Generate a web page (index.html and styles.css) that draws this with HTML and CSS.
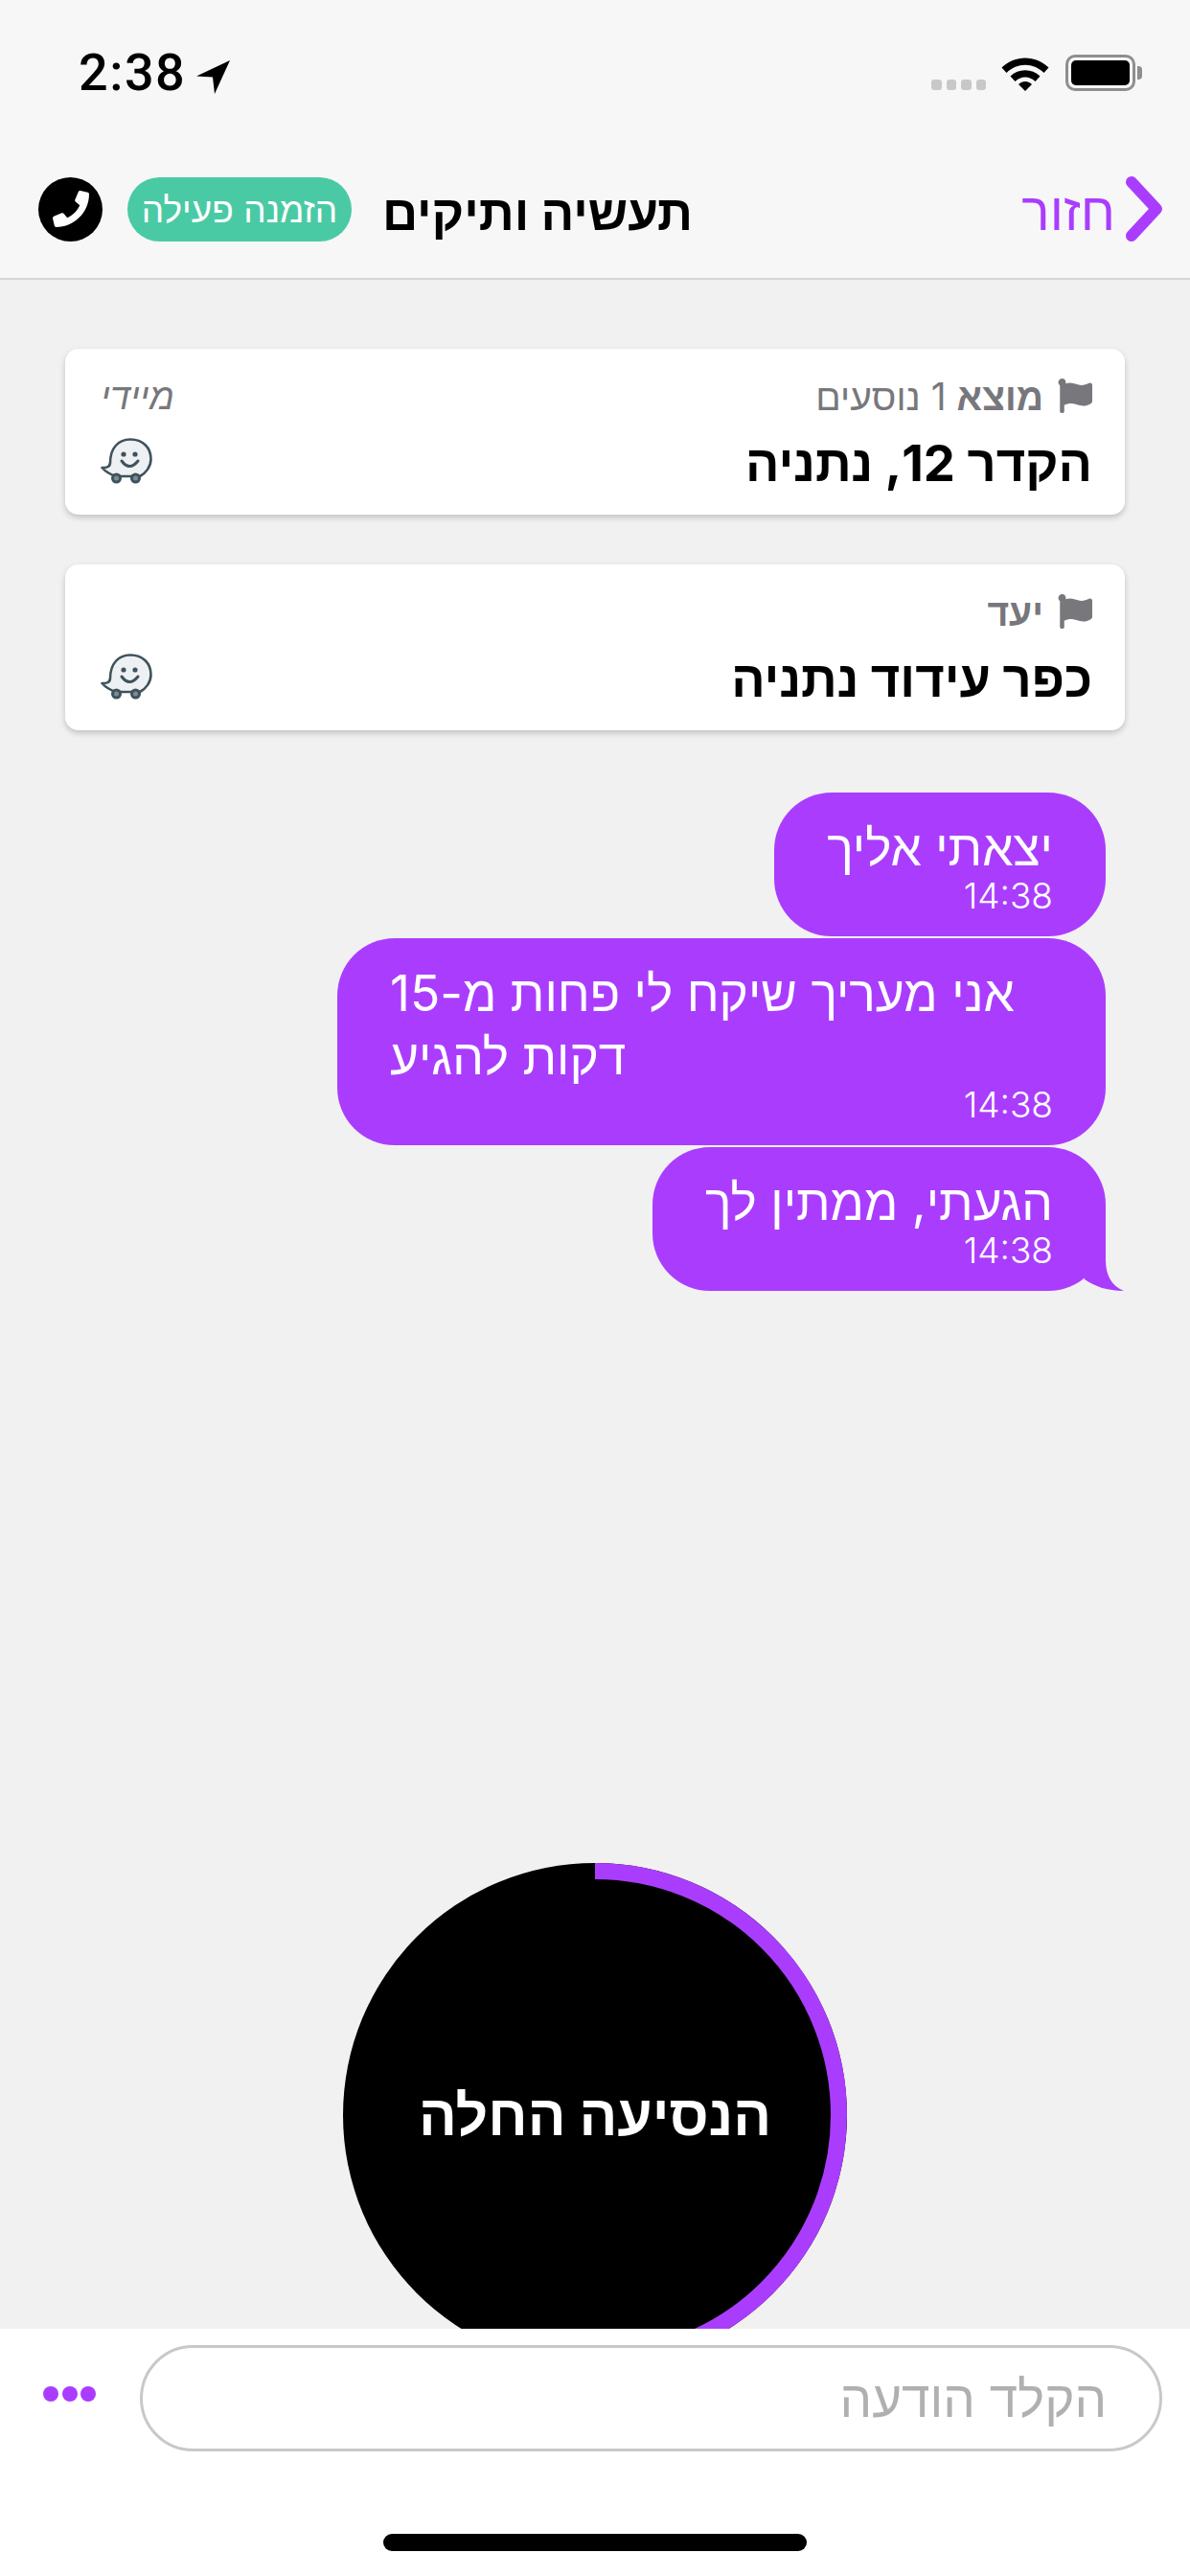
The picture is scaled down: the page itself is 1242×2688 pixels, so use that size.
FILE: index.html
```html
<!DOCTYPE html>
<html lang="he" dir="rtl">
<head>
<meta charset="utf-8">
<title>Chat</title>
<link rel="stylesheet" href="styles.css">
</head>
<body>
<svg class="defs" width="0" height="0" aria-hidden="true">
  <symbol id="flag" viewBox="0 0 512 512">
    <path d="M349.565 98.783C295.978 98.783 251.721 64 184.348 64c-24.955 0-47.309 4.384-68.045 12.013a55.947 55.947 0 0 0 3.586-23.562C118.117 24.015 94.806 1.206 66.338.048 34.345-1.254 8 24.296 8 56c0 19.026 9.497 35.825 24 45.945V488c0 13.255 10.745 24 24 24h16c13.255 0 24-10.745 24-24v-94.4c28.311-12.064 63.582-22.122 114.435-22.122 53.588 0 97.844 34.783 165.217 34.783 48.169 0 86.667-16.294 122.505-40.858C506.84 359.452 512 349.571 512 339.045v-243.1c0-23.393-24.269-38.87-45.485-29.016-34.338 15.948-76.454 31.854-116.95 31.854z"/>
  </symbol>
  <symbol id="waze" viewBox="0 0 54 48">
    <path d="M10 26C10 10 19 1.500 31 1.500C44 1.500 52.500 10 52.500 22C52.500 30 47 37 41 40L16 40C10 38 5 35 1.500 31C5 31 9.500 31 10 26Z" fill="#eef1f3" stroke="#3f525c" stroke-width="2.600" stroke-linejoin="round"/>
    <circle cx="16.500" cy="42" r="4" fill="#7d8c94" stroke="#3f525c" stroke-width="3"/>
    <circle cx="36.500" cy="42" r="4" fill="#7d8c94" stroke="#3f525c" stroke-width="3"/>
    <circle cx="24" cy="17" r="2.600" fill="#3f525c"/>
    <circle cx="36" cy="17" r="2.600" fill="#3f525c"/>
    <path d="M22 24Q30 35 39 24" fill="none" stroke="#3f525c" stroke-width="3" stroke-linecap="round"/>
  </symbol>
</svg>

<div class="page">
  <header class="top">
    <div class="status">
      <div class="status-left">
        <span class="clock">2:38</span>
        <svg class="loc" viewBox="0 0 36 36"><path d="M35 0L0 16.500L17 17.500L19 35Z"/></svg>
      </div>
      <div class="status-right">
        <div class="signal"><i></i><i></i><i></i><i></i></div>
        <svg class="wifi" viewBox="0 0 50 38">
          <path d="M0.500 13.500C14 0 36 0 49.500 13.500L44.500 19C33.500 8 16.500 8 5.500 19Z"/>
          <path d="M9.500 22.500C18 14 32 14 40.500 22.500L35.500 28C29.500 22 20.500 22 14.500 28Z"/>
          <path d="M18 31C22 27 28 27 32 31L25 38Z"/>
        </svg>
        <div class="battery"><div class="cell"></div><div class="nub"></div></div>
      </div>
    </div>
    <nav class="nav">
      <div class="back">
        <svg class="chev" viewBox="0 0 38 68"><path d="M6 6L32 34L6 62"/></svg>
        <span>חזור</span>
      </div>
      <div class="nav-info">
        <h1 class="title">תעשיה ותיקים</h1>
        <span class="badge">הזמנה פעילה</span>
        <span class="phone">
          <svg viewBox="0 0 512 512"><path d="M493.400 24.600l-104-24c-11.300-2.600-22.900 3.300-27.500 13.900l-48 112c-4.200 9.800-1.400 21.300 6.900 28l60.600 49.600c-36 76.700-98.900 140.500-177.200 177.200l-49.600-60.600c-6.800-8.300-18.200-11.100-28-6.900l-112 48C3.900 366.500-2 378.100.6 389.400l24 104C27.100 504.200 36.700 512 48 512c256.100 0 464-207.500 464-464 0-11.200-7.700-20.900-18.600-23.400z"/></svg>
        </span>
      </div>
    </nav>
  </header>

  <main class="main">
    <section class="card">
      <div class="card-head">
        <svg class="flag"><use href="#flag"/></svg>
        <span class="label"><b>מוצא</b> 1 נוסעים</span>
        <em class="when">מיידי</em>
      </div>
      <div class="card-body">
        <span class="place">הקדר 12, נתניה</span>
        <svg class="waze"><use href="#waze"/></svg>
      </div>
    </section>
    <section class="card">
      <div class="card-head">
        <svg class="flag"><use href="#flag"/></svg>
        <span class="label"><b>יעד</b></span>
      </div>
      <div class="card-body">
        <span class="place">כפר עידוד נתניה</span>
        <svg class="waze"><use href="#waze"/></svg>
      </div>
    </section>

    <div class="thread">
      <div class="bubble">
        <p class="msg">יצאתי אליך</p>
        <time class="stamp">14:38</time>
      </div>
      <div class="bubble">
        <p class="msg">אני מעריך שיקח לי פחות מ-15 דקות להגיע</p>
        <time class="stamp">14:38</time>
      </div>
      <div class="bubble">
        <p class="msg">הגעתי, ממתין לך</p>
        <time class="stamp">14:38</time>
        <svg class="tail" viewBox="0 0 44 60"><path d="M25 0L25 28C25 43 31 55 44 60C26 60 13 55 3 48L0 20Z"/></svg>
      </div>
    </div>

    <div class="trip">
      <svg class="ring" viewBox="0 0 526 526"><path d="M263 8.500A254.500 254.500 0 0 1 263 517.500"/></svg>
      <span class="trip-text">הנסיעה החלה</span>
    </div>
  </main>

  <footer class="composer">
    <div class="composer-row">
      <div class="field">הקלד הודעה</div>
      <div class="more"><i></i><i></i><i></i></div>
    </div>
    <div class="home"></div>
  </footer>
</div>
</body>
</html>
```

FILE: styles.css
```css
* { box-sizing: border-box; }

html, body {
  margin: 0;
  padding: 0;
}

body {
  font-family: Inter, "Liberation Sans", sans-serif;
  background: #f1f1f1;
  color: #000;
}

.defs { position: absolute; }

.page {
  width: 1242px;
  height: 2688px;
  display: flex;
  flex-direction: column;
  overflow: hidden;
}

/* Header */
.top {
  background: #f7f7f7;
  border-bottom: 2px solid #d6d6d6;
  height: 292px;
  flex-shrink: 0;
}

.status {
  direction: ltr;
  height: 146px;
  padding: 50px 57px 0 82px;
  display: flex;
  justify-content: space-between;
  align-items: flex-start;
}

.status-left {
  display: flex;
  align-items: center;
  gap: 11px;
}

.clock {
  font-family: Roboto, sans-serif;
  font-size: 54px;
  font-weight: 500;
  letter-spacing: 1.500px;
  line-height: 52px;
}

.loc { width: 36px; height: 36px; margin-top: 9px; }

.status-right {
  display: flex;
  align-items: flex-end;
  padding-top: 7px;
}

.signal {
  display: flex;
  gap: 5px;
  margin-right: 16px;
  padding-bottom: 1px;
}

.signal i {
  width: 10.500px;
  height: 11px;
  border-radius: 3px;
  background: #c8c8c8;
}

.wifi { width: 50px; height: 38px; display: block; margin-right: 17px; }

.battery {
  position: relative;
  width: 73px;
  height: 38px;
  border: 3px solid #8e8e8e;
  border-radius: 10px;
  padding: 3px;
}

.cell {
  width: 100%;
  height: 100%;
  background: #000;
  border-radius: 5px;
}

.nub {
  position: absolute;
  left: 72px;
  top: 9px;
  width: 5px;
  height: 14px;
  background: #8e8e8e;
  border-radius: 0 4px 4px 0;
}

.nav {
  height: 144px;
  padding: 0 29px 0 40px;
  display: flex;
  align-items: center;
  justify-content: space-between;
}

.back {
  display: flex;
  align-items: center;
  gap: 11px;
  color: #aa3dfd;
  font-size: 55px;
}

.back span { padding-top: 3px; }

.chev { width: 38px; height: 68px; display: block; }
.chev path {
  fill: none;
  stroke: #aa3dfd;
  stroke-width: 12;
  stroke-linecap: round;
  stroke-linejoin: round;
}

.nav-info {
  display: flex;
  align-items: center;
}

.title {
  margin: 0 0 0 32px;
  padding-top: 6px;
  font-size: 51.500px;
  font-weight: 700;
  line-height: 67px;
}

.badge {
  width: 234px;
  height: 67px;
  margin-left: 26px;
  border-radius: 34px;
  background: #4acaa4;
  color: #fff;
  font-size: 37px;
  display: flex;
  align-items: center;
  justify-content: center;
}

.phone {
  width: 67px;
  height: 67px;
  border-radius: 50%;
  background: #000;
  display: flex;
  align-items: center;
  justify-content: center;
}

.phone svg { width: 38px; height: 38px; fill: #fff; }

/* Main */
.main {
  flex: 1;
  min-height: 0;
  padding: 72px 68px 0;
  background: #f1f1f1;
  display: flex;
  flex-direction: column;
  gap: 52px;
  overflow: hidden;
}

.card {
  height: 173px;
  flex-shrink: 0;
  background: #fff;
  border-radius: 14px;
  box-shadow: 0 3px 6px rgba(0, 0, 0, 0.2);
  padding: 26px 34px 21px 37px;
  display: flex;
  flex-direction: column;
  gap: 16px;
}

.card-head {
  height: 46px;
  display: flex;
  align-items: center;
  gap: 15px;
  color: #77777c;
  font-size: 39px;
}

.flag { width: 36px; height: 36px; fill: #77777c; flex-shrink: 0; }

.when {
  margin-right: auto;
  font-size: 38px;
  font-style: italic;
}

.card-body {
  height: 64px;
  display: flex;
  align-items: center;
  justify-content: space-between;
}

.place {
  font-size: 52.500px;
  font-weight: 700;
  margin-top: -2px;
}

.waze { width: 54px; height: 48px; flex-shrink: 0; margin-top: -6px; }

/* Messages */
.thread {
  margin-top: 13px;
  padding-right: 20px;
  display: flex;
  flex-direction: column;
  align-items: flex-start;
  gap: 2px;
  flex-shrink: 0;
}

.bubble {
  position: relative;
  max-width: 802px;
  padding: 24px 55px 20px;
  border-radius: 60px;
  background: #aa3dfd;
  color: #fff;
}

.msg {
  margin: 0;
  font-size: 51.500px;
  line-height: 66px;
  text-align: left;
}

.stamp {
  display: block;
  margin-top: -2px;
  margin-bottom: 2px;
  font-size: 37px;
  font-weight: 300;
  line-height: 40px;
  text-align: right;
}

.tail {
  position: absolute;
  right: -19px;
  bottom: 0;
  width: 44px;
  height: 60px;
  fill: #aa3dfd;
}

/* Trip button */
.trip {
  position: relative;
  width: 526px;
  height: 526px;
  flex-shrink: 0;
  align-self: center;
  margin-top: auto;
  margin-bottom: -40px;
  border-radius: 50%;
  background: #000;
  display: flex;
  align-items: center;
  justify-content: center;
}

.ring {
  position: absolute;
  left: 0;
  top: 0;
  width: 526px;
  height: 526px;
}

.ring path {
  fill: none;
  stroke: #aa3dfd;
  stroke-width: 17;
}

.trip-text {
  color: #fff;
  font-size: 59px;
  font-weight: 700;
  margin-top: -2px;
}

/* Composer */
.composer {
  height: 258px;
  flex-shrink: 0;
  background: #fff;
  padding-top: 17px;
  display: flex;
  flex-direction: column;
}

.composer-row {
  height: 111px;
  padding: 0 29px 0 45px;
  display: flex;
  align-items: center;
  gap: 46px;
}

.field {
  flex: 1;
  height: 111px;
  border: 3px solid #c8c8cc;
  border-radius: 56px;
  padding: 0 55px;
  display: flex;
  align-items: center;
  color: #b0b0b0;
  font-size: 53px;
}

.more {
  width: 55px;
  display: flex;
  justify-content: space-between;
  margin-top: -10px;
}

.more i {
  width: 16px;
  height: 16px;
  border-radius: 50%;
  background: #aa3dfd;
}

.home {
  align-self: center;
  width: 442px;
  height: 18px;
  margin-top: 86px;
  border-radius: 9px;
  background: #000;
}
```
